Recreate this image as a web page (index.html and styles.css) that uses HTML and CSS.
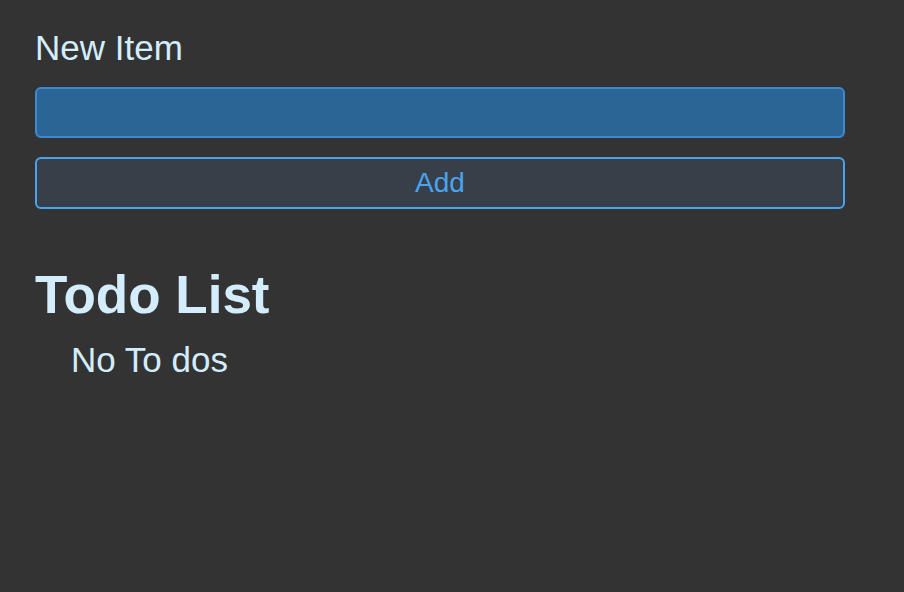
FILE: index.html
```html
<!DOCTYPE html>
<html>
<head>
<meta charset="utf-8">
<link rel="stylesheet" href="styles.css">
</head>
<body>
<main class="app">
  <form class="new-form">
    <label class="label" for="item">New Item</label>
    <input class="input" id="item" type="text">
    <button class="btn" type="button">Add</button>
  </form>
  <h1 class="title">Todo List</h1>
  <p class="empty">No To dos</p>
</main>
</body>
</html>
```
FILE: styles.css
```css
html, body {
  margin: 0;
  padding: 0;
  background: #333333;
  height: 100%;
}
body {
  font-family: "Liberation Sans", Arial, sans-serif;
  color: #d4edfd;
}
.app {
  padding: 28px 0 0 35px;
  width: 810px;
}
.new-form {
  display: flex;
  flex-direction: column;
}
.label {
  font-size: 35px;
  line-height: 40px;
  margin-bottom: 19px;
}
.input {
  box-sizing: border-box;
  height: 51px;
  width: 810px;
  margin: 0;
  background: #2a6595;
  border: 2px solid #3d89cf;
  border-radius: 6px;
  outline: none;
  font-size: 28px;
  color: #d4edfd;
}
.btn {
  box-sizing: border-box;
  margin-top: 19px;
  height: 52px;
  width: 810px;
  background: #373f49;
  border: 2px solid #4aa3ef;
  border-radius: 6px;
  color: #4aa3ef;
  font-family: "Liberation Sans", Arial, sans-serif;
  font-size: 28px;
  padding: 0;
}
.title {
  margin: 55px 0 0;
  font-size: 53px;
  line-height: 61px;
  font-weight: bold;
}
.empty {
  margin: 15px 0 0;
  padding-left: 36px;
  font-size: 35px;
  line-height: 40px;
}
```
